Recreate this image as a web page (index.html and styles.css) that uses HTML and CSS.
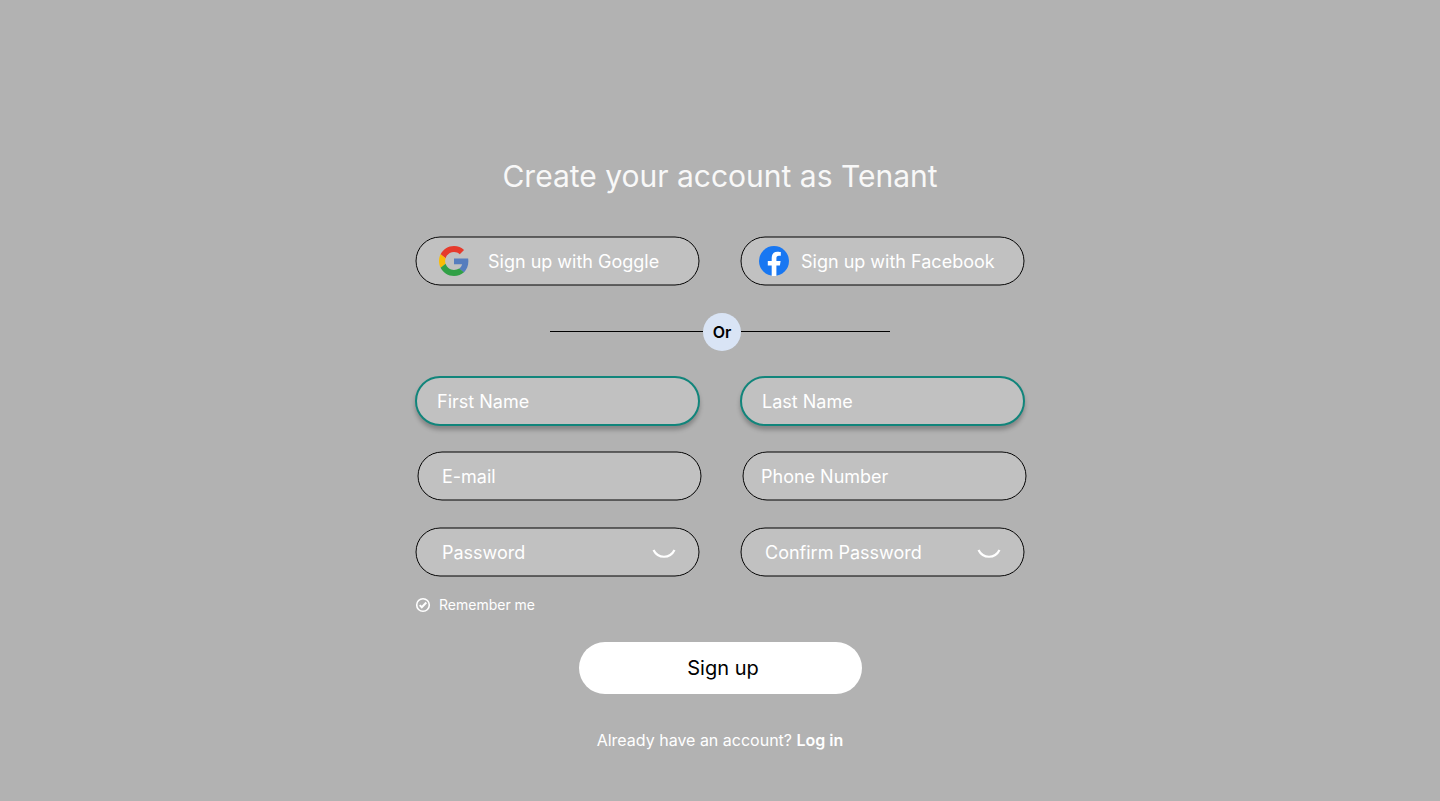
FILE: index.html
```html
<!DOCTYPE html>
<html lang="en">
<head>
<meta charset="utf-8">
<meta name="viewport" content="width=device-width, initial-scale=1">
<title>Create your account</title>
<link rel="stylesheet" href="styles.css">
</head>
<body>
<main class="signup">
  <h1 class="title">Create your account as Tenant</h1>
  <div class="row">
    <button class="field social google" type="button">
      <svg class="logo" viewBox="0 0 48 48" aria-hidden="true">
        <path fill="#e63a2b" d="M24 9.5c3.54 0 6.71 1.22 9.21 3.6l6.85-6.85C35.9 2.38 30.47 0 24 0 14.62 0 6.51 5.38 2.56 13.22l7.98 6.19C12.43 13.72 17.74 9.5 24 9.5z"/>
        <path fill="#567dbe" d="M46.98 24.55c0-1.57-.15-3.09-.38-4.55H24v9.02h12.94c-.58 2.96-2.26 5.48-4.78 7.18l7.73 6c4.51-4.18 7.09-10.36 7.09-17.65z"/>
        <path fill="#fabc05" d="M10.53 28.59c-.48-1.45-.76-2.99-.76-4.59s.27-3.14.76-4.59l-7.98-6.19C.92 16.46 0 20.12 0 24c0 3.88.92 7.54 2.56 10.78l7.97-6.19z"/>
        <path fill="#31a046" d="M24 48c6.48 0 11.93-2.13 15.89-5.81l-7.73-6c-2.15 1.45-4.92 2.3-8.16 2.3-6.26 0-11.57-4.22-13.47-9.91l-7.98 6.19C6.51 42.62 14.62 48 24 48z"/>
      </svg>
      <span>Sign up with Goggle</span>
    </button>
    <button class="field social facebook" type="button">
      <svg class="logo" viewBox="0 0 30 30" aria-hidden="true">
        <circle cx="15" cy="15" r="15" fill="#1877f2"/>
        <path fill="#fff" d="M12.7 30V19.4H8.8V15h3.9v-3.3c0-3.8 2.3-5.9 5.700-5.900 1.700 0 3.400.3 3.400.3v3.700h-1.900c-1.900 0-2.500 1.200-2.500 2.400V15h4.200l-.7 4.400h-3.500V30z"/>
      </svg>
      <span>Sign up with Facebook</span>
    </button>
  </div>
  <div class="divider"><span class="or">Or</span></div>
  <form class="form">
    <div class="row">
      <input class="field accent" type="text" placeholder="First Name" aria-label="First Name">
      <input class="field accent" type="text" placeholder="Last Name" aria-label="Last Name">
    </div>
    <div class="row contact">
      <input class="field email" type="email" placeholder="E-mail" aria-label="E-mail">
      <input class="field phone" type="tel" placeholder="Phone Number" aria-label="Phone Number">
    </div>
    <div class="row">
      <div class="field secret">
        <input class="bare" type="password" placeholder="Password" aria-label="Password">
        <button class="eye" type="button" aria-label="Show password"><svg viewBox="0 0 24 12" aria-hidden="true"><path d="M1.500 2C6 11 18 11 22.500 2"/></svg></button>
      </div>
      <div class="field secret confirm">
        <input class="bare" type="password" placeholder="Confirm Password" aria-label="Confirm Password">
        <button class="eye" type="button" aria-label="Show password"><svg viewBox="0 0 24 12" aria-hidden="true"><path d="M1.500 2C6 11 18 11 22.500 2"/></svg></button>
      </div>
    </div>
    <label class="remember">
      <span class="tick">
        <input type="checkbox" checked>
        <svg viewBox="0 0 16 16" aria-hidden="true"><circle cx="8" cy="8" r="6.300"/><path d="M4.700 8.100l2.100 2.100 4.500-4.700"/></svg>
      </span>
      Remember me
    </label>
    <button class="submit" type="submit">Sign up</button>
  </form>
  <p class="login">Already have an account? <a href="#">Log in</a></p>
</main>
</body>
</html>
```

FILE: styles.css
```css
* { box-sizing: border-box; }

body {
  margin: 0;
  min-height: 100vh;
  background: #b2b2b2;
  color: #fff;
  font-family: Inter, "Liberation Sans", sans-serif;
  font-weight: 400;
}

button, input { font: inherit; color: inherit; }
button { cursor: pointer; }

.signup {
  max-width: 642px;
  margin: 0 auto;
  padding: 156px 16px 48px;
}

.title {
  margin: 0 0 40px;
  font-size: 30px;
  line-height: 40px;
  font-weight: 400;
  text-align: center;
  color: #f8f8f8;
}

.row {
  display: grid;
  grid-template-columns: 1fr 1fr;
  gap: 40px;
}

/* Pill outline: a hairline stroke that stretches with the control. */
.field {
  width: 100%;
  min-width: 0;
  height: 50px;
  padding: 0 22px;
  border: 0;
  border-radius: 25px;
  background: url("data:image/svg+xml,%3Csvg xmlns='http://www.w3.org/2000/svg' width='100%25' height='100%25'%3E%3Crect x='1' y='1' rx='24' style='width:calc(100%25 - 2px);height:calc(100%25 - 2px)' fill='%23c1c1c1' stroke='%23000'/%3E%3C/svg%3E") center / 100% 100% no-repeat;
  font-size: 18px;
  line-height: 24px;
}

.field::placeholder, .bare::placeholder { color: #fff; opacity: 1; }

.social { display: flex; align-items: center; }
.social span { padding-top: 2px; }
.google { padding-left: 24px; gap: 19px; }
.facebook { padding-left: 19px; gap: 12px; }
.logo { width: 30px; height: 30px; flex: none; }

.divider {
  display: flex;
  align-items: center;
  max-width: 340px;
  margin: 27px auto 25px;
}
.divider::before, .divider::after {
  content: "";
  flex: 153 1 0;
  height: 1px;
  margin-bottom: 1px;
  background: #000;
}
.divider::after { flex-grow: 149; }

.or {
  width: 38px;
  height: 38px;
  border-radius: 50%;
  background: #d9e4f5;
  color: #000;
  font-size: 16px;
  line-height: 38px;
  font-weight: 600;
  text-align: center;
}

.form { display: flex; flex-direction: column; gap: 25px; }

.accent {
  padding: 0 20px;
  border: 2px solid #11857b;
  background: #c1c1c1;
  box-shadow: 0 4px 4px rgba(0, 0, 0, 0.25);
}

.contact { margin: 0 -2px 1px 2px; }
.email { padding-left: 25px; }
.phone { padding-left: 19px; }

.secret {
  display: flex;
  align-items: center;
  padding: 2px 24px 0 27px;
}
.confirm { padding-left: 25px; }

.bare {
  flex: 1;
  min-width: 0;
  padding: 0;
  border: 0;
  background: none;
}

.eye {
  display: flex;
  padding: 2px 0 0;
  border: 0;
  background: none;
}
.eye svg {
  width: 24px;
  height: 12px;
  fill: none;
  stroke: #fff;
  stroke-width: 2.2;
}

.remember {
  display: flex;
  align-items: center;
  align-self: flex-start;
  gap: 8px;
  margin: -7px 0 2px;
  font-size: 14px;
  line-height: 20px;
}

.tick { position: relative; width: 16px; height: 16px; }
.tick input {
  position: absolute;
  inset: 0;
  width: 100%;
  height: 100%;
  margin: 0;
  opacity: 0;
}
.tick svg {
  display: block;
  fill: none;
  stroke: #fff;
  stroke-width: 1.6;
}
.tick path { stroke-width: 2; }

.submit {
  align-self: center;
  width: 283px;
  max-width: 100%;
  height: 52px;
  padding: 0 0 0 6px;
  border: 0;
  border-radius: 26px;
  background: #fff;
  color: #000;
  font-size: 20px;
  font-weight: 400;
}

.login {
  margin: 36px 0 0;
  font-size: 16px;
  line-height: 20px;
  text-align: center;
}
.login a { color: inherit; font-weight: 600; text-decoration: none; }
```
